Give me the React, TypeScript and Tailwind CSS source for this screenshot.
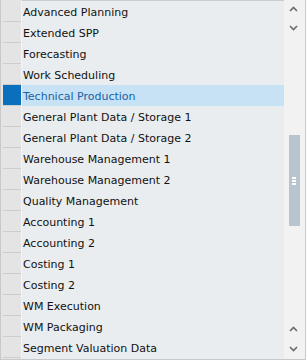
const rows = [
  'Advanced Planning',
  'Extended SPP',
  'Forecasting',
  'Work Scheduling',
  'Technical Production',
  'General Plant Data / Storage 1',
  'General Plant Data / Storage 2',
  'Warehouse Management 1',
  'Warehouse Management 2',
  'Quality Management',
  'Accounting 1',
  'Accounting 2',
  'Costing 1',
  'Costing 2',
  'WM Execution',
  'WM Packaging',
  'Segment Valuation Data',
];

const selected = 'Technical Production';

const Chevron = ({ up }: { up?: boolean }) => (
  <svg width="9" height="6" viewBox="0 0 9 6" className="block">
    <path
      d={up ? 'M1 5L4.5 1.5L8 5' : 'M1 1L4.5 4.5L8 1'}
      fill="none"
      stroke="#6b6b6b"
      strokeWidth={1.6}
    />
  </svg>
);

export default function App() {
  return (
    <div
      className="w-[306px] h-[361px] bg-white flex flex-col"
      style={{ fontFamily: '"DejaVu Sans", Tahoma, sans-serif' }}
    >
      <div className="flex h-[360px] border-l border-r border-b border-[#c8c8c8]">
        {/* Row selector column */}
        <div className="w-[20px] bg-[#e4e4e4] pl-[2px] pt-[1px] flex flex-col">
          {rows.map((name) => (
            <div
              key={name}
              className={`h-[21px] shrink-0 border-b ${
                name === selected
                  ? 'bg-[#0a6fbd] border-[#cdcdcd]'
                  : 'border-[#cdcdcd]'
              }`}
            />
          ))}
        </div>

        {/* List content */}
        <div className="w-[263px] bg-[#e9edf0] border-l border-[#f4f4f4] border-t border-t-[#c9cdd0] flex flex-col">
          {rows.map((name) => (
            <div
              key={name}
              className={`h-[21px] shrink-0 pl-[1px] pt-[3px] flex items-center text-[11px] whitespace-nowrap overflow-hidden ${
                name === selected ? 'bg-[#c6e2f4] text-[#1762a8]' : 'text-[#111]'
              }`}
            >
              {name}
            </div>
          ))}
        </div>

        {/* Scrollbar */}
        <div className="flex-1 bg-[#f2f2f2] flex flex-col items-center pt-[6px] pb-[7px]">
          <div className="flex flex-col items-center gap-[13px] pr-[2px]">
            <Chevron up />
            <Chevron />
          </div>
          <div className="mt-[104px] w-[11px] h-[91px] bg-[#b8c5cf] flex flex-col items-center justify-center gap-[1px] mr-[1px]">
            <div className="w-[4px] h-[2px] bg-white" />
            <div className="w-[4px] h-[2px] bg-white" />
            <div className="w-[4px] h-[2px] bg-white" />
          </div>
          <div className="mt-auto flex flex-col items-center gap-[14px] pr-[2px]">
            <Chevron up />
            <Chevron />
          </div>
        </div>
      </div>
    </div>
  );
}
